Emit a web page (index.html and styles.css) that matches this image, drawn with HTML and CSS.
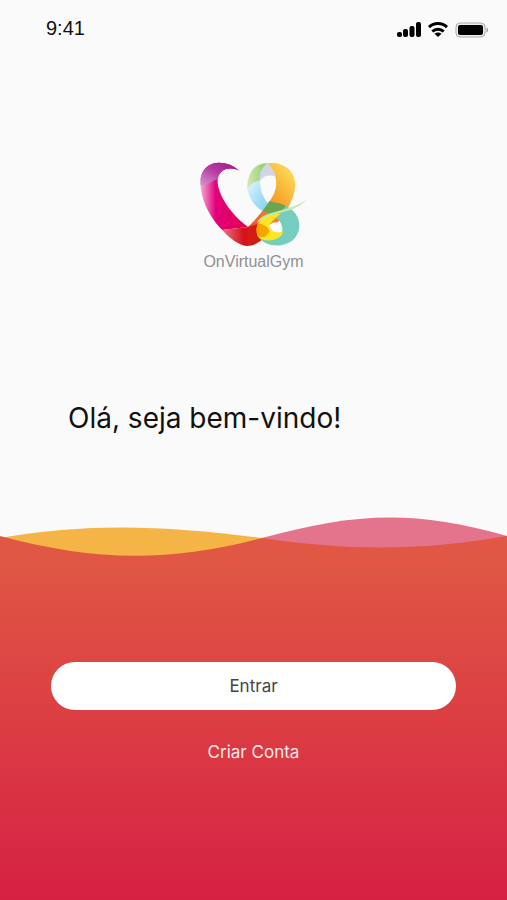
FILE: index.html
```html
<!DOCTYPE html>
<html lang="pt">
<head>
  <meta charset="UTF-8">
  <meta name="viewport" content="width=device-width, initial-scale=1">
  <title>OnVirtualGym</title>
  <link rel="stylesheet" href="styles.css">
</head>
<body>
  <header class="status">
    <span class="time">9:41</span>
    <div class="status-icons">
      <svg width="24" height="16" viewBox="0 0 24 16" aria-hidden="true">
        <rect x="0" y="10" width="5" height="5" rx="2"/>
        <rect x="6" y="7" width="5" height="8" rx="2"/>
        <rect x="12.500" y="4" width="5" height="11" rx="2"/>
        <rect x="19" y="0" width="5" height="15" rx="2"/>
      </svg>
      <svg width="22" height="16" viewBox="0 0 22 16" aria-hidden="true">
        <path d="M2 5.200C7 .4 15 .4 20 5.200M5.300 9.500C8.500 6.500 13.500 6.500 16.700 9.500" fill="none" stroke="#000" stroke-width="3"/>
        <path d="M7.500 11.800C9.400 10.200 12.600 10.200 14.500 11.800L11 15Z"/>
      </svg>
      <svg width="34" height="16" viewBox="0 0 34 16" aria-hidden="true">
        <rect x="1" y="1" width="29" height="14" rx="4" fill="#eee" stroke="#aaa"/>
        <rect x="3" y="3" width="25" height="10" rx="2"/>
        <path d="M31.500 5.500C33.500 6 33.500 10 31.500 10.500Z" fill="#999"/>
      </svg>
    </div>
  </header>

  <main>
    <div class="logo">
      <svg class="logo-mark" viewBox="30 30 330 264" aria-hidden="true">
        <defs>
          <linearGradient id="pink" x1="0" x2="1">
            <stop offset="0" stop-color="#e3007b" stop-opacity=".3"/>
            <stop offset=".32" stop-color="#e3007b"/>
            <stop offset="1" stop-color="#e2004f"/>
          </linearGradient>
          <linearGradient id="purple" x1="0" y1="1" x2="1" y2="0">
            <stop offset="0" stop-color="#d397cf"/>
            <stop offset=".5" stop-color="#b63ba3"/>
            <stop offset="1" stop-color="#9c1580"/>
          </linearGradient>
          <linearGradient id="red" x1="0" x2="1">
            <stop offset="0" stop-color="#ef7180"/>
            <stop offset=".45" stop-color="#d3131c"/>
            <stop offset="1" stop-color="#d9200f"/>
          </linearGradient>
          <linearGradient id="amber" x1="0" y1="1" x2=".8" y2="0">
            <stop offset="0" stop-color="#e4491d"/>
            <stop offset=".4" stop-color="#f0822f"/>
            <stop offset=".6" stop-color="#f6a32c"/>
            <stop offset="1" stop-color="#fddb55"/>
          </linearGradient>
          <linearGradient id="green" x1="0" x2="1">
            <stop offset="0" stop-color="#cfe9b4"/>
            <stop offset="1" stop-color="#8ccb65"/>
          </linearGradient>
          <linearGradient id="blue" x1="0" x2="1" y1="0" y2="1">
            <stop offset="0" stop-color="#e4f5fc"/>
            <stop offset=".6" stop-color="#a3ddf6"/>
            <stop offset="1" stop-color="#86d3f2"/>
          </linearGradient>
        </defs>
        <path d="M150 62C129 51 94 52 86 86C82 130 125 194 177 231L100 240C64 204 34 150 34 92C38 29 112 24 150 62Z" fill="url(#pink)"/>
        <path d="M150 62C129 51 94 52 86 86C72 94 54 104 35 106C27 26 112 24 150 62Z" fill="url(#purple)"/>
        <path d="M100 240L177 231L206 222L242 245C222 270 200 288 174 288C148 286 118 262 100 240Z" fill="url(#red)"/>
        <path d="M177 231C206 203 220 184 237 160C272 118 268 72 235 40C278 34 319 58 319 106C316 152 286 198 242 245C220 264 198 252 177 231Z" fill="url(#amber)"/>
        <path d="M177 231L206 222C204 246 221 260 234 254C208 280 190 284 174 280Z" fill="#d61c12"/>
        <path d="M235 40C198 39 174 65 175 118C188 101 199 95 213 92C211 72 218 55 235 40Z" fill="url(#green)"/>
        <path d="M235 40C218 55 210 70 213 92C223 77 242 73 261 80C257 65 247 52 235 40Z" fill="#d3d3e7"/>
        <path d="M213 92C194 94 182 104 175 118C182 151 200 172 222 184L237 160C221 141 213 116 213 92Z" fill="url(#blue)"/>
        <path d="M237 160L220 183C246 197 273 190 293 170C276 157 256 160 241 153Z" fill="#6ba552"/>
        <path d="M290 168C330 184 342 230 320 261C297 293 232 298 207 259C225 271 271 276 279 246C283 227 273 207 252 198C266 192 280 184 290 168Z" fill="#75cdbd"/>
        <path d="M206 259C192 220 223 191 275 191C260 203 252 210 240 226C248 246 265 252 282 244C279 272 225 282 206 259Z" fill="#ffe620"/>
        <path d="M207 220C225 223 238 232 242 245L226 262L207 259C202 246 202 232 207 220Z" fill="#f5a400"/>
        <path d="M240 226C257 209 277 218 279 239C267 251 247 248 240 226Z" fill="#fff"/>
        <path d="M204 219C215 181 300 188 352 149C315 193 247 182 204 219Z" fill="#c8e7a7"/>
      </svg>
      <span class="logo-name">OnVirtualGym</span>
    </div>
    <h1>Olá, seja bem-vindo!</h1>
  </main>

  <svg class="wave" viewBox="0 0 507 50" preserveAspectRatio="none" aria-hidden="true">
    <path class="wave-yellow" d="M0 28C90 12 170 16 262 28L262 50H0Z"/>
    <path class="wave-pink" d="M262 28C350 4 410-2 507 26V50H262Z"/>
    <path class="wave-red" d="M0 26C90 50 165 54 262 28C350 41 420 41 507 26V50H0Z"/>
  </svg>
  <section class="actions">
    <button type="button" class="enter">Entrar</button>
    <a href="#" class="signup">Criar Conta</a>
  </section>
</body>
</html>
```
FILE: styles.css
```css
* { box-sizing: border-box; }
body { margin: 0; min-height: 100vh; display: flex; flex-direction: column; background: #fafafa; font-family: Inter, sans-serif; color: #111; }

.status { display: flex; justify-content: space-between; align-items: center; padding: 16px 18px 0 46px; }
.time { font: 20px/24px "Liberation Sans", Arial, sans-serif; }
.status-icons { display: flex; gap: 6px; padding-top: 4px; }

.logo { display: flex; flex-direction: column; align-items: center; padding-top: 120px; }
.logo-mark { width: 110px; height: 88px; }
.logo-name { margin-top: 4px; font: 16px/20px "Liberation Sans", Arial, sans-serif; color: #909093; }
h1 { margin: 128px 68px 0; font-size: 28px; line-height: 36px; font-weight: 400; }

.wave { display: block; width: 100%; height: 50px; margin-top: 74px; }
.wave-yellow { fill: #f5b546; }
.wave-pink { fill: #e4738c; }
.wave-red { fill: #e05743; }

.actions { flex: 1; display: flex; flex-direction: column; align-items: center; padding: 102px 51px 40px; background: linear-gradient(#e05743, #d62143); }
.enter { width: 100%; height: 48px; border: none; border-radius: 24px; background: #fff; color: #444; font: 17px/24px Inter, sans-serif; cursor: pointer; }
.signup { margin-top: 30px; color: #ffe9e9; font-size: 17px; line-height: 24px; text-decoration: none; }
```
